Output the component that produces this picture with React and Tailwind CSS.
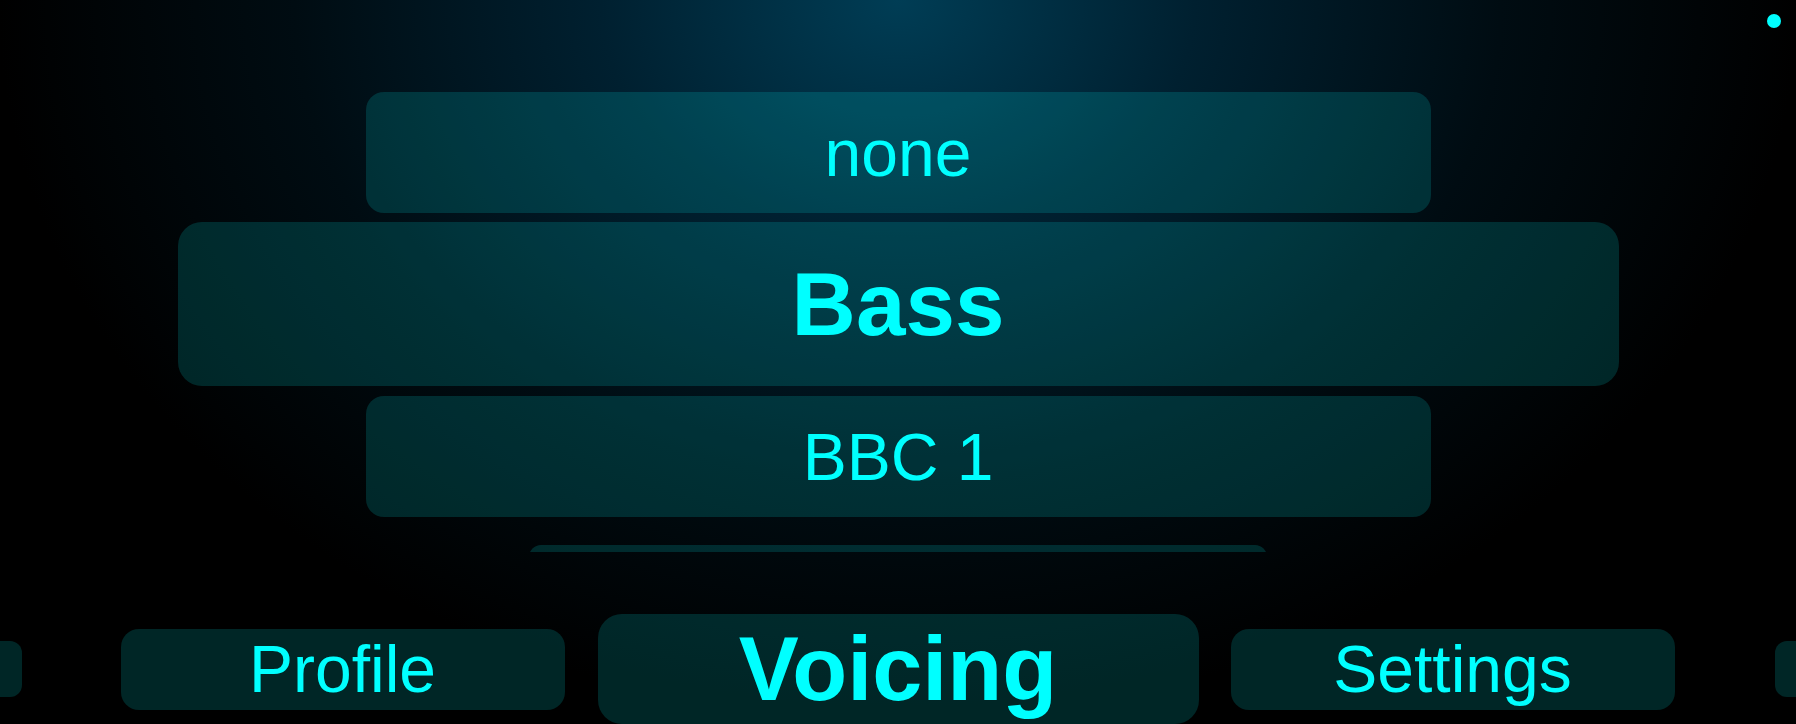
import React from "react";

const font = { fontFamily: '"Liberation Sans", Arial, sans-serif' };

export default function App() {
  return (
    <div
      className="relative w-[1796px] h-[724px] overflow-hidden flex flex-col bg-[radial-gradient(ellipse_900px_720px_at_50%_0%,#003d55_0%,#002030_33%,#000c12_67%,#000_100%)] text-[#00ffff]"
      style={font}
    >
      {/* List wheel */}
      <div className="h-[552px] shrink-0 overflow-hidden flex flex-col items-center pt-[92px]">
        <div className="w-[1065px] h-[121px] shrink-0 rounded-[18px] bg-[#00ffff]/15 flex items-center justify-center text-[66px] leading-none">
          none
        </div>
        <div className="mt-[9px] w-[1441px] h-[164px] shrink-0 rounded-[24px] bg-[#00ffff]/15 flex items-center justify-center text-[89px] leading-none font-bold">
          Bass
        </div>
        <div className="mt-[10px] w-[1065px] h-[121px] shrink-0 rounded-[18px] bg-[#00ffff]/15 flex items-center justify-center text-[66px] leading-none">
          BBC 1
        </div>
        <div className="mt-[28px] w-[738px] h-[84px] shrink-0 rounded-[12px] bg-[#00ffff]/15" />
      </div>

      {/* Bottom navigation */}
      <div className="mt-[62px] h-[110px] shrink-0 flex items-center justify-center overflow-hidden">
        <div className="w-[307px] h-[56px] shrink-0 rounded-[12px] bg-[#00ffff]/15" />
        <div className="ml-[99px] w-[444px] h-[81px] shrink-0 rounded-[18px] bg-[#00ffff]/15 flex items-center justify-center text-[66px] leading-none">
          Profile
        </div>
        <div className="ml-[33px] w-[601px] h-[110px] shrink-0 rounded-[24px] bg-[#00ffff]/15 flex items-center justify-center text-[90px] leading-none font-bold">
          Voicing
        </div>
        <div className="ml-[32px] w-[444px] h-[81px] shrink-0 rounded-[18px] bg-[#00ffff]/15 flex items-center justify-center text-[66px] leading-none">
          Settings
        </div>
        <div className="ml-[100px] w-[307px] h-[56px] shrink-0 rounded-[12px] bg-[#00ffff]/15" />
      </div>

      {/* Status dot */}
      <div className="absolute top-[14px] right-[15px] w-[14px] h-[14px] rounded-full bg-[#00ffff]" />
    </div>
  );
}
